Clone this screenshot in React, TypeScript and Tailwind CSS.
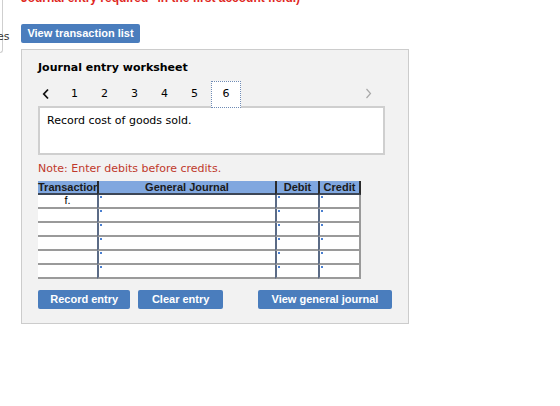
import React from 'react'

const rows = ['f.', '', '', '', '', '']
const tabs = ['1', '2', '3', '4', '5']

function EntryCell({ last }: { last?: boolean }) {
  return (
    <div
      className={
        'relative h-[14px] bg-white border-l-2 border-l-[#5b6b86] border-b-2 border-b-[#9a9a9a]' +
        (last ? ' border-r-2 border-r-[#9a9a9a]' : '')
      }
    >
      <span className="absolute left-[1px] top-[1px] w-[2px] h-[2px] bg-[#4a7fd0]" />
    </div>
  )
}

function BlueButton({ children, className }: { children: React.ReactNode; className?: string }) {
  return (
    <button
      className={
        "h-[19px] rounded-[2px] bg-[#4a7dbd] text-white font-bold text-[11px] font-['Liberation_Sans',sans-serif] leading-none " +
        (className ?? '')
      }
    >
      {children}
    </button>
  )
}

export default function App() {
  return (
    <div className="w-[560px] h-[406px] bg-white overflow-hidden flex font-['DejaVu_Sans',sans-serif]">
      {/* cut-off sidebar on the left */}
      <div className="w-[21px] shrink-0">
        <div className="w-[3px] h-[53px] border-r border-b border-[#cfcfcf] rounded-br-[3px] relative">
          <span className="absolute left-[-3px] top-[31px] text-[11px] text-[#333] leading-none">es</span>
        </div>
      </div>

      <div className="flex flex-col">
        <div className="-mt-[8px] h-[12px] text-[#e0281f] font-bold text-[12px] leading-none font-['Liberation_Sans',sans-serif] whitespace-nowrap">
          Journal entry required" in the first account field.)
        </div>

        <BlueButton className="mt-[20px] w-[119px]">View transaction list</BlueButton>

        <div className="mt-[6px] w-[388px] h-[275px] bg-[#f2f2f2] border border-[#cccccc] px-[16px] pt-[12px]">
          <div className="text-[11px] font-bold text-black leading-none h-[13px]">Journal entry worksheet</div>

          {/* step tabs */}
          <div className="mt-[6px] h-[25px] flex items-center">
            <svg width="8" height="12" viewBox="0 0 8 12" className="ml-[4px]">
              <path d="M6 1.5 L1.8 6 L6 10.5" fill="none" stroke="#111" strokeWidth="1.8" />
            </svg>
            <div className="flex ml-[21px] text-[11px] text-black">
              {tabs.map((t) => (
                <span key={t} className="w-[30px] leading-none">{t}</span>
              ))}
            </div>
            <div className="-ml-[10px] w-[30px] h-[27px] bg-white border border-dotted border-[#6f8bb5] flex items-center justify-center text-[11px] text-black z-10 self-start">
              6
            </div>
            <svg width="7" height="11" viewBox="0 0 7 11" className="ml-auto mr-[20px]">
              <path d="M1.5 1 L5.5 5.5 L1.5 10" fill="none" stroke="#a8a8a8" strokeWidth="1.2" />
            </svg>
          </div>

          <div className="w-[347px] h-[49px] bg-white border-2 border-[#cfcfcf] px-[7px] pt-[7px] text-[11px] text-black leading-none">
            Record cost of goods sold.
          </div>

          <div className="mt-[8px] text-[11px] text-[#c0392b] leading-none">Note: Enter debits before credits.</div>

          {/* journal grid */}
          <div className="mt-[7px] w-[323px] grid grid-cols-[59px_178px_43px_43px] font-['Liberation_Sans',sans-serif]">
            <div className="h-[14px] bg-[#80a7df] border-b-2 border-[#3c4656] text-[11px] font-bold text-[#1a1a1a] leading-[12px] whitespace-nowrap overflow-visible">
              Transaction
            </div>
            <div className="h-[14px] bg-[#80a7df] border-b-2 border-b-[#3c4656] border-l-2 border-l-[#2a2a2a] text-[11px] font-bold text-[#1a1a1a] leading-[12px] text-center">
              General Journal
            </div>
            <div className="h-[14px] bg-[#80a7df] border-b-2 border-b-[#3c4656] border-l-2 border-l-[#2a2a2a] text-[11px] font-bold text-[#1a1a1a] leading-[12px] text-center">
              Debit
            </div>
            <div className="h-[14px] bg-[#80a7df] border-b-2 border-b-[#3c4656] border-l-2 border-l-[#2a2a2a] border-r-2 border-r-[#2a2a2a] text-[11px] font-bold text-[#1a1a1a] leading-[12px] text-center">
              Credit
            </div>
            {rows.map((r, i) => (
              <React.Fragment key={i}>
                <div className="h-[14px] bg-white border-b-2 border-[#9a9a9a] text-[11px] text-black leading-[11px] text-center">
                  {r}
                </div>
                <EntryCell />
                <EntryCell />
                <EntryCell last />
              </React.Fragment>
            ))}
          </div>

          <div className="mt-[11px] flex">
            <BlueButton className="w-[93px]">Record entry</BlueButton>
            <BlueButton className="ml-[8px] w-[85px]">Clear entry</BlueButton>
            <BlueButton className="ml-[35px] w-[135px]">View general journal</BlueButton>
          </div>
        </div>
      </div>
    </div>
  )
}
